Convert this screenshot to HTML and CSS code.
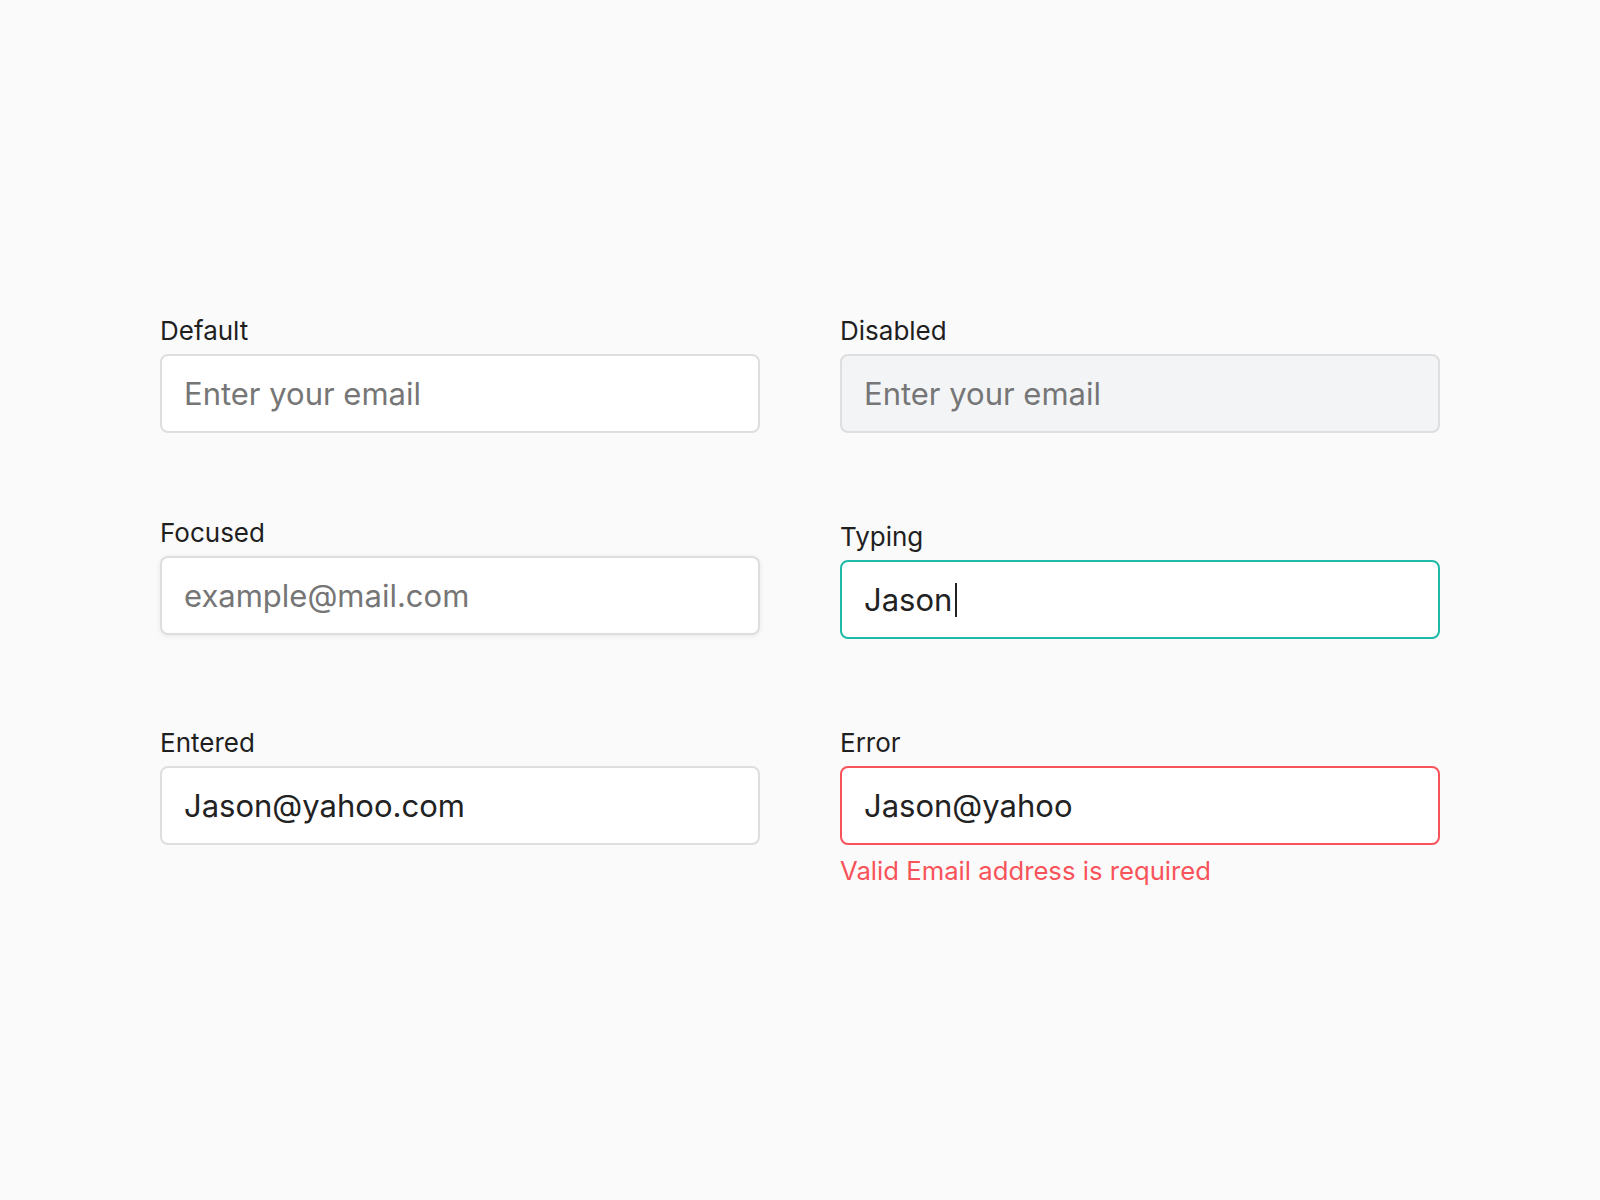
FILE: index.html
```html
<!DOCTYPE html>
<html lang="en">
<head>
<meta charset="utf-8">
<title>Input states</title>
<link rel="stylesheet" href="styles.css">
</head>
<body>
<main class="grid">
  <div class="field">
    <div class="label">Default</div>
    <div class="input"><span class="placeholder">Enter your email</span></div>
  </div>
  <div class="field">
    <div class="label">Disabled</div>
    <div class="input disabled"><span class="placeholder">Enter your email</span></div>
  </div>
  <div class="field r2">
    <div class="label">Focused</div>
    <div class="input focused"><span class="placeholder">example@mail.com</span></div>
  </div>
  <div class="field r2 shift">
    <div class="label">Typing</div>
    <div class="input typing"><span class="value">Jason</span><span class="caret"></span></div>
  </div>
  <div class="field r3">
    <div class="label">Entered</div>
    <div class="input"><span class="value">Jason@yahoo.com</span></div>
  </div>
  <div class="field r3">
    <div class="label">Error</div>
    <div class="input error"><span class="value">Jason@yahoo</span></div>
    <div class="message">Valid Email address is required</div>
  </div>
</main>
</body>
</html>
```

FILE: styles.css
```css
html, body {
  margin: 0;
  padding: 0;
  background: #fafafa;
}
body {
  font-family: Inter, "Noto Sans", "Liberation Sans", sans-serif;
  color: #222222;
  width: 1600px;
  height: 1200px;
}
.grid {
  display: grid;
  grid-template-columns: 600px 600px;
  column-gap: 80px;
  align-items: start;
  padding: 315px 160px 0 160px;
}
.field {
  display: flex;
  flex-direction: column;
}
.r2 { margin-top: 84px; }
.r3 { margin-top: 88px; }
.shift { margin-top: 88px; }
.label {
  font-size: 26px;
  line-height: 32px;
  height: 32px;
  margin-bottom: 7px;
  color: #1f1f1f;
}
.input {
  box-sizing: border-box;
  height: 79px;
  border: 2px solid #dedede;
  border-radius: 8px;
  background: #ffffff;
  display: flex;
  align-items: center;
  padding: 0 22px;
  font-size: 31px;
}
.placeholder { color: #767676; }
.value { color: #222222; }
.disabled { background: #f3f4f6; }
.focused { box-shadow: 0 1px 5px rgba(0, 0, 0, 0.08); }
.typing { border-color: #1dbaa8; }
.error { border-color: #f9535a; }
.caret {
  display: inline-block;
  width: 2px;
  height: 34px;
  background: #222222;
  margin-left: 3px;
}
.message {
  margin-top: 10px;
  font-size: 25.7px;
  line-height: 32px;
  color: #f9535a;
}
```
